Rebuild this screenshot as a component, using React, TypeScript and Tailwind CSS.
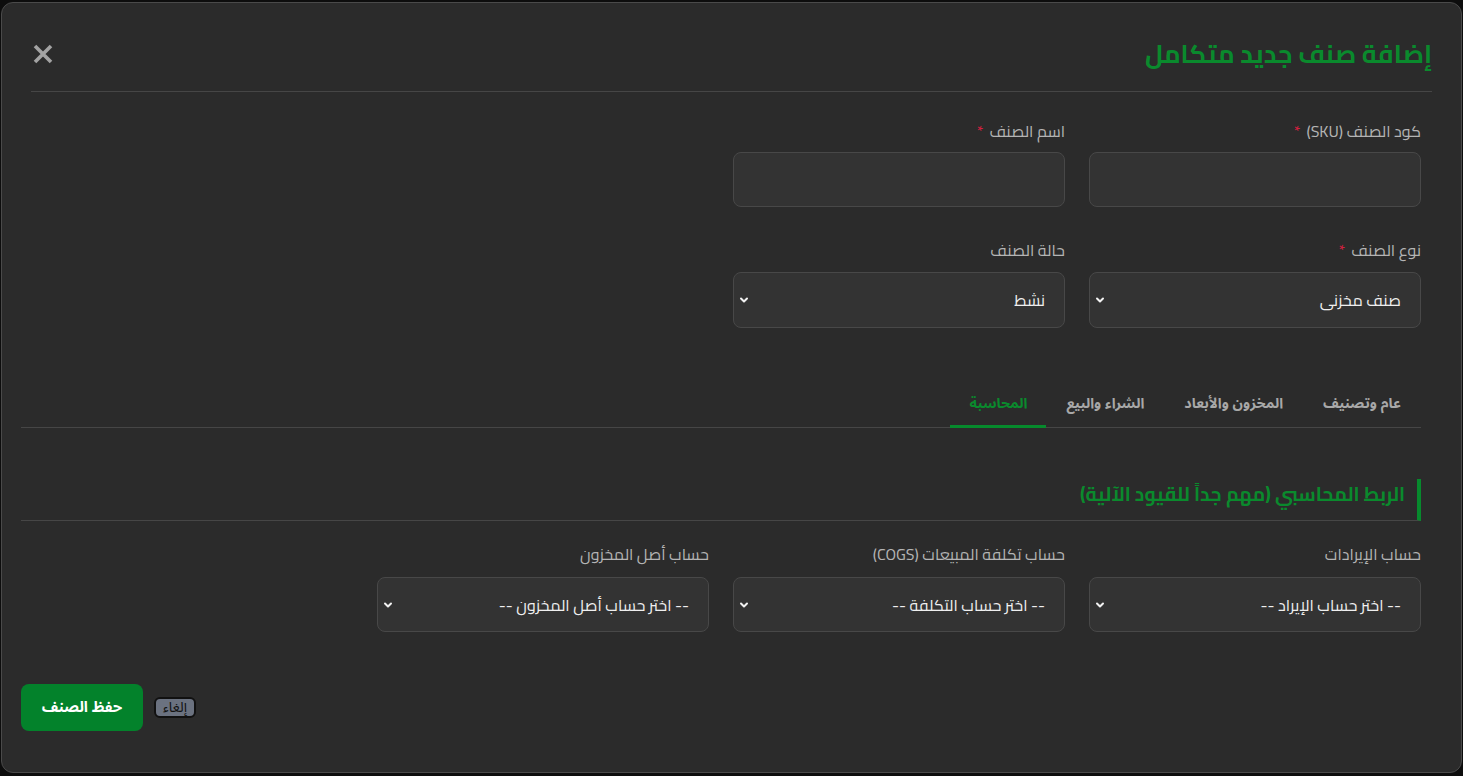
const cairo = { fontFamily: '"Cairo", "Noto Sans Arabic", sans-serif' };
const noto = { fontFamily: '"Noto Sans Arabic", sans-serif' };

function Chevron() {
  return (
    <svg className="pointer-events-none absolute left-[6px] top-1/2 -translate-y-1/2" width="10" height="10" viewBox="0 0 10 10">
      <path d="M2 3.5 L5 6.5 L8 3.5" fill="none" stroke="#f2f2f2" strokeWidth="2" strokeLinecap="round" strokeLinejoin="round" />
    </svg>
  );
}

function Label({ text, required, gap }: { text: string; required?: boolean; gap: "9" | "10" | "11" }) {
  const mb = gap === "9" ? "mb-[9px]" : gap === "10" ? "mb-[10px]" : "mb-[11px]";
  return (
    <label className={`${mb} block text-[16px] leading-[24px] text-[#b4b4b4]`}>
      {text}
      {required && <span className="mr-[6px] text-[#d3203f]">*</span>}
    </label>
  );
}

function TextField({ label, required }: { label: string; required?: boolean }) {
  return (
    <div>
      <Label text={label} required={required} gap="9" />
      <input
        type="text"
        className="block h-[55px] w-full rounded-[8px] border border-[#484848] bg-[#333333] px-[20px] text-[16px] text-[#eeeeee] outline-none"
        style={cairo}
      />
    </div>
  );
}

function SelectField({ label, value, required, gap, tall }: { label: string; value: string; required?: boolean; gap: "9" | "10" | "11"; tall?: boolean }) {
  return (
    <div>
      <Label text={label} required={required} gap={gap} />
      <div className="relative">
        <select
          defaultValue={value}
          className={`${tall ? "h-[56px]" : "h-[55px]"} block w-full appearance-none rounded-[8px] border border-[#484848] bg-[#333333] pl-[24px] pr-[19px] text-[16px] text-[#efefef] outline-none`}
          style={cairo}
        >
          <option value={value}>{value}</option>
        </select>
        <Chevron />
      </div>
    </div>
  );
}

export default function App() {
  const tabs = ["عام وتصنيف", "المخزون والأبعاد", "الشراء والبيع", "المحاسبة"];
  return (
    <div className="min-h-screen bg-[#0d0d0d] px-[1px] pt-[2px]" dir="rtl" style={cairo}>
      <div className="flex h-[771px] w-full flex-col rounded-[12px] border border-[#4a4a4a] bg-[#2b2b2b]">
        {/* header */}
        <div className="ml-[29px] mr-[29px] flex items-center justify-between border-b border-[#464646] pb-[17px] pt-[31px]">
          <h2 className="text-[25.6px] font-bold leading-[40px] text-[#0a8a2d]" style={cairo}>
            إضافة صنف جديد متكامل
          </h2>
          <button className="flex h-[24px] w-[24px] items-center justify-center" aria-label="close">
            <svg width="22" height="22" viewBox="0 0 22 22">
              <path d="M3 3 L19 19 M19 3 L3 19" stroke="#a3a3a3" strokeWidth="3.6" strokeLinecap="butt" />
            </svg>
          </button>
        </div>

        {/* body */}
        <div className="ml-[19px] mr-[40px] pt-[27px]">
          <div className="grid grid-cols-4 gap-x-[24px] gap-y-[31px]">
            <TextField label="كود الصنف (SKU)" required />
            <TextField label="اسم الصنف" required />
            <div />
            <div />
            <SelectField label="نوع الصنف" value="صنف مخزني" required gap="10" tall />
            <SelectField label="حالة الصنف" value="نشط" gap="10" tall />
          </div>

          {/* tabs */}
          <div className="mt-[53px] flex border-b border-[#464646]">
            {tabs.map((t, i) => (
              <button
                key={t}
                className={
                  i === 3
                    ? "-mb-px border-b-[3px] border-[#078a2d] px-[19px] pb-[9px] pt-[11px] text-[14.3px] font-bold leading-[24px] text-[#0a8a2d]"
                    : "-mb-px border-b-[3px] border-transparent px-[20px] pb-[9px] pt-[11px] text-[14.3px] font-bold leading-[24px] text-[#a8a8a8]"
                }
                style={noto}
              >
                {t}
              </button>
            ))}
          </div>

          {/* accounting section */}
          <div className="mt-[51px]">
            <h3 className="border-b border-r-4 border-b-[#464646] border-r-[#078a2d] pb-[10px] pr-[12px] text-[19.2px] font-bold leading-[31px] text-[#0a8a2d]" style={cairo}>
              الربط المحاسبي (مهم جداً للقيود الآلية)
            </h3>
            <div className="grid grid-cols-4 gap-x-[24px] pt-[21px]">
              <SelectField label="حساب الإيرادات" value="-- اختر حساب الإيراد --" gap="11" />
              <SelectField label="حساب تكلفة المبيعات (COGS)" value="-- اختر حساب التكلفة --" gap="11" />
              <SelectField label="حساب أصل المخزون" value="-- اختر حساب أصل المخزون --" gap="11" />
            </div>
          </div>

          {/* footer buttons */}
          <div className="mt-[52px] flex items-center justify-end gap-[11px]">
            <button
              className="h-[21px] rounded-[6px] border-2 border-[#111111] bg-[#6b7280] px-[7px] text-[14px] leading-[14px] text-[#111111]"
              style={noto}
            >
              إلغاء
            </button>
            <button
              className="h-[47px] w-[122px] rounded-[8px] bg-[#03822b] text-[15px] font-bold text-white"
              style={noto}
            >
              حفظ الصنف
            </button>
          </div>
        </div>
      </div>
    </div>
  );
}
